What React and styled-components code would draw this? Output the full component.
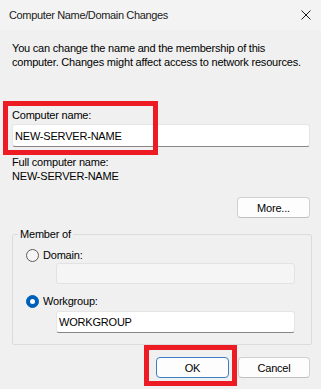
import React from 'react';
import styled, { createGlobalStyle } from 'styled-components';

const Global = createGlobalStyle`
  html, body { margin: 0; padding: 0; background: #f0f0f0; }
  body { font-family: "Liberation Sans", Arial, sans-serif; }
`;

const Window = styled.div`
  position: relative;
  width: 321px;
  height: 389px;
  background: #f0f0f0;
  font-family: "Liberation Sans", Arial, sans-serif;
  font-size: 11px;
  letter-spacing: -0.2px;
  color: #000;
  display: flex;
  flex-direction: column;
  overflow: hidden;
`;

const TitleBar = styled.div`
  height: 30px;
  flex: none;
  box-sizing: border-box;
  display: flex;
  align-items: center;
  justify-content: space-between;
  padding: 0 10px 0 9px;
  background: #f3f3f3;
  color: #1a1a1a;
`;

const Title = styled.span`
  font-size: 11px;
  letter-spacing: -0.35px;
  line-height: 14px;
`;

const CloseButton = styled.span`
  display: flex;
  width: 10px;
  height: 10px;
`;

const Body = styled.div`
  display: flex;
  flex-direction: column;
  padding: 11px 11px 0 12px;
`;

const Text = styled.p`
  margin: ${(p) => p.$mt || 0}px 0 0;
  line-height: 14px;
  white-space: nowrap;
`;

const TextBox = styled.div`
  box-sizing: border-box;
  height: ${(p) => p.$h || 23}px;
  margin: ${(p) => p.$mt || 0}px 0 0 ${(p) => p.$ml || 0}px;
  padding: 0 2px;
  display: flex;
  align-items: center;
  background: ${(p) => (p.$disabled ? '#f5f5f5' : '#ffffff')};
  border: 1px solid ${(p) => (p.$disabled ? '#e2e2e2' : '#e5e5e5')};
  border-bottom-color: ${(p) => (p.$disabled ? '#e2e2e2' : '#868686')};
  border-radius: 3px;
  line-height: 14px;
`;

const ButtonRow = styled.div`
  display: flex;
  justify-content: flex-end;
  gap: 9px;
  margin-top: ${(p) => p.$mt || 0}px;
`;

const Button = styled.div`
  box-sizing: border-box;
  width: ${(p) => p.$w}px;
  height: 21px;
  display: flex;
  align-items: center;
  justify-content: center;
  background: #fdfdfd;
  border: 1px solid ${(p) => (p.$primary ? '#3b7fc4' : '#d0d0d0')};
  border-bottom-color: ${(p) => (p.$primary ? '#3b7fc4' : '#c0c0c0')};
  border-radius: 4px;
  color: #000;
`;

const Group = styled.fieldset`
  margin: 9px -2px 0 0;
  padding: 7px 16px 11px 13px;
  border: 1px solid #dcdcdc;
  border-radius: 2px;
  min-width: 0;
`;

const Legend = styled.legend`
  margin-left: -8px;
  padding: 0 2px;
  line-height: 14px;
`;

const RadioRow = styled.div`
  display: flex;
  align-items: center;
  gap: 4px;
  height: 14px;
  margin-top: ${(p) => p.$mt || 0}px;
`;

const Radio = styled.span`
  box-sizing: border-box;
  width: 13px;
  height: 13px;
  border-radius: 50%;
  display: flex;
  align-items: center;
  justify-content: center;
  background: ${(p) => (p.$checked ? '#005fb8' : '#f5f5f5')};
  border: 1px solid ${(p) => (p.$checked ? '#005fb8' : '#5c5c5c')};

  &::after {
    content: '';
    display: ${(p) => (p.$checked ? 'block' : 'none')};
    width: 5px;
    height: 5px;
    border-radius: 50%;
    background: #ffffff;
  }
`;

const Highlight = styled.div`
  position: absolute;
  box-sizing: border-box;
  left: ${(p) => p.$x}px;
  top: ${(p) => p.$y}px;
  width: ${(p) => p.$w}px;
  height: ${(p) => p.$h}px;
  border: 5px solid #ed1c24;
  pointer-events: none;
`;

export default function App() {
  return (
    <>
      <Global />
      <Window>
        <TitleBar>
          <Title>Computer Name/Domain Changes</Title>
          <CloseButton>
            <svg width="10" height="10" viewBox="0 0 10 10">
              <path d="M0.5 0.5 L9.5 9.5 M9.5 0.5 L0.5 9.5" stroke="#1a1a1a" strokeWidth="1" />
            </svg>
          </CloseButton>
        </TitleBar>
        <Body>
          <Text>You can change the name and the membership of this</Text>
          <Text>computer. Changes might affect access to network resources.</Text>
          <Text $mt={39}>Computer name:</Text>
          <TextBox $mt={2}>NEW-SERVER-NAME</TextBox>
          <Text $mt={8}>Full computer name:</Text>
          <Text>NEW-SERVER-NAME</Text>
          <ButtonRow $mt={14}>
            <Button $w={73}>More...</Button>
          </ButtonRow>
          <Group>
            <Legend>Member of</Legend>
            <RadioRow>
              <Radio />
              <span>Domain:</span>
            </RadioRow>
            <TextBox $mt={1} $ml={30} $h={21} $disabled />
            <RadioRow $mt={10}>
              <Radio $checked />
              <span>Workgroup:</span>
            </RadioRow>
            <TextBox $mt={3} $ml={30} $h={22}>WORKGROUP</TextBox>
          </Group>
          <ButtonRow $mt={12}>
            <Button $w={73} $primary>OK</Button>
            <Button $w={72}>Cancel</Button>
          </ButtonRow>
        </Body>
        <Highlight $x={3} $y={101} $w={155} $h={54} />
        <Highlight $x={144} $y={345} $w={93} $h={41} />
      </Window>
    </>
  );
}
